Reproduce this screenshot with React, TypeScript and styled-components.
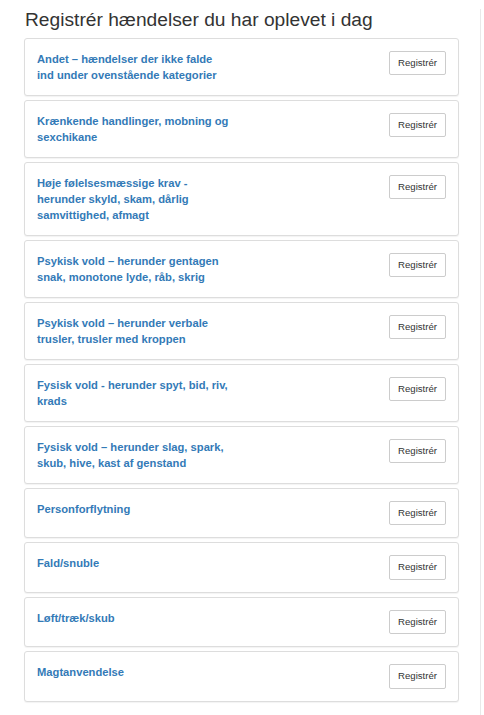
import React from "react";
import styled, { createGlobalStyle } from "styled-components";

const GlobalStyle = createGlobalStyle`
  html, body {
    margin: 0;
    padding: 0;
    background: #ffffff;
  }
  body {
    font-family: "Liberation Sans", Arial, Helvetica, sans-serif;
    color: #333333;
  }
`;

const Page = styled.div`
  width: 481px;
  min-height: 715px;
  box-sizing: border-box;
  border-right: 1px solid #e9e9e9;
  padding: 0 21px 8px 24px;
`;

const Heading = styled.h3`
  margin: 9px 0 8px 1px;
  font-size: 19.2px;
  line-height: 21px;
  font-weight: 400;
  color: #333333;
`;

const List = styled.div`
  display: flex;
  flex-direction: column;
  gap: 4px;
`;

const Card = styled.div`
  display: flex;
  align-items: flex-start;
  justify-content: space-between;
  border: 1px solid #dddddd;
  border-radius: 3px;
  box-shadow: 0 1px 1px rgba(0, 0, 0, 0.05);
  padding: 12px;
  background: #ffffff;
`;

const Title = styled.div`
  max-width: 194px;
  font-size: 11.2px;
  line-height: 16px;
  font-weight: 700;
  color: #337ab7;
`;

const Button = styled.button`
  flex: none;
  box-sizing: border-box;
  height: 24.4px;
  padding: 4px 8px;
  font-family: "Liberation Sans", Arial, Helvetica, sans-serif;
  font-size: 9.6px;
  line-height: 14.4px;
  color: #333333;
  background: #ffffff;
  border: 1px solid #cccccc;
  border-radius: 2px;
  cursor: pointer;
`;

const items = [
  "Andet – hændelser der ikke falde ind under ovenstående kategorier",
  "Krænkende handlinger, mobning og sexchikane",
  "Høje følelsesmæssige krav - herunder skyld, skam, dårlig samvittighed, afmagt",
  "Psykisk vold – herunder gentagen snak, monotone lyde, råb, skrig",
  "Psykisk vold – herunder verbale trusler, trusler med kroppen",
  "Fysisk vold - herunder spyt, bid, riv, krads",
  "Fysisk vold – herunder slag, spark, skub, hive, kast af genstand",
  "Personforflytning",
  "Fald/snuble",
  "Løft/træk/skub",
  "Magtanvendelse",
];

export default function App() {
  return (
    <>
      <GlobalStyle />
      <Page>
        <Heading>Registrér hændelser du har oplevet i dag</Heading>
        <List>
          {items.map((t) => (
            <Card key={t}>
              <Title>{t}</Title>
              <Button type="button">Registrér</Button>
            </Card>
          ))}
        </List>
      </Page>
    </>
  );
}
